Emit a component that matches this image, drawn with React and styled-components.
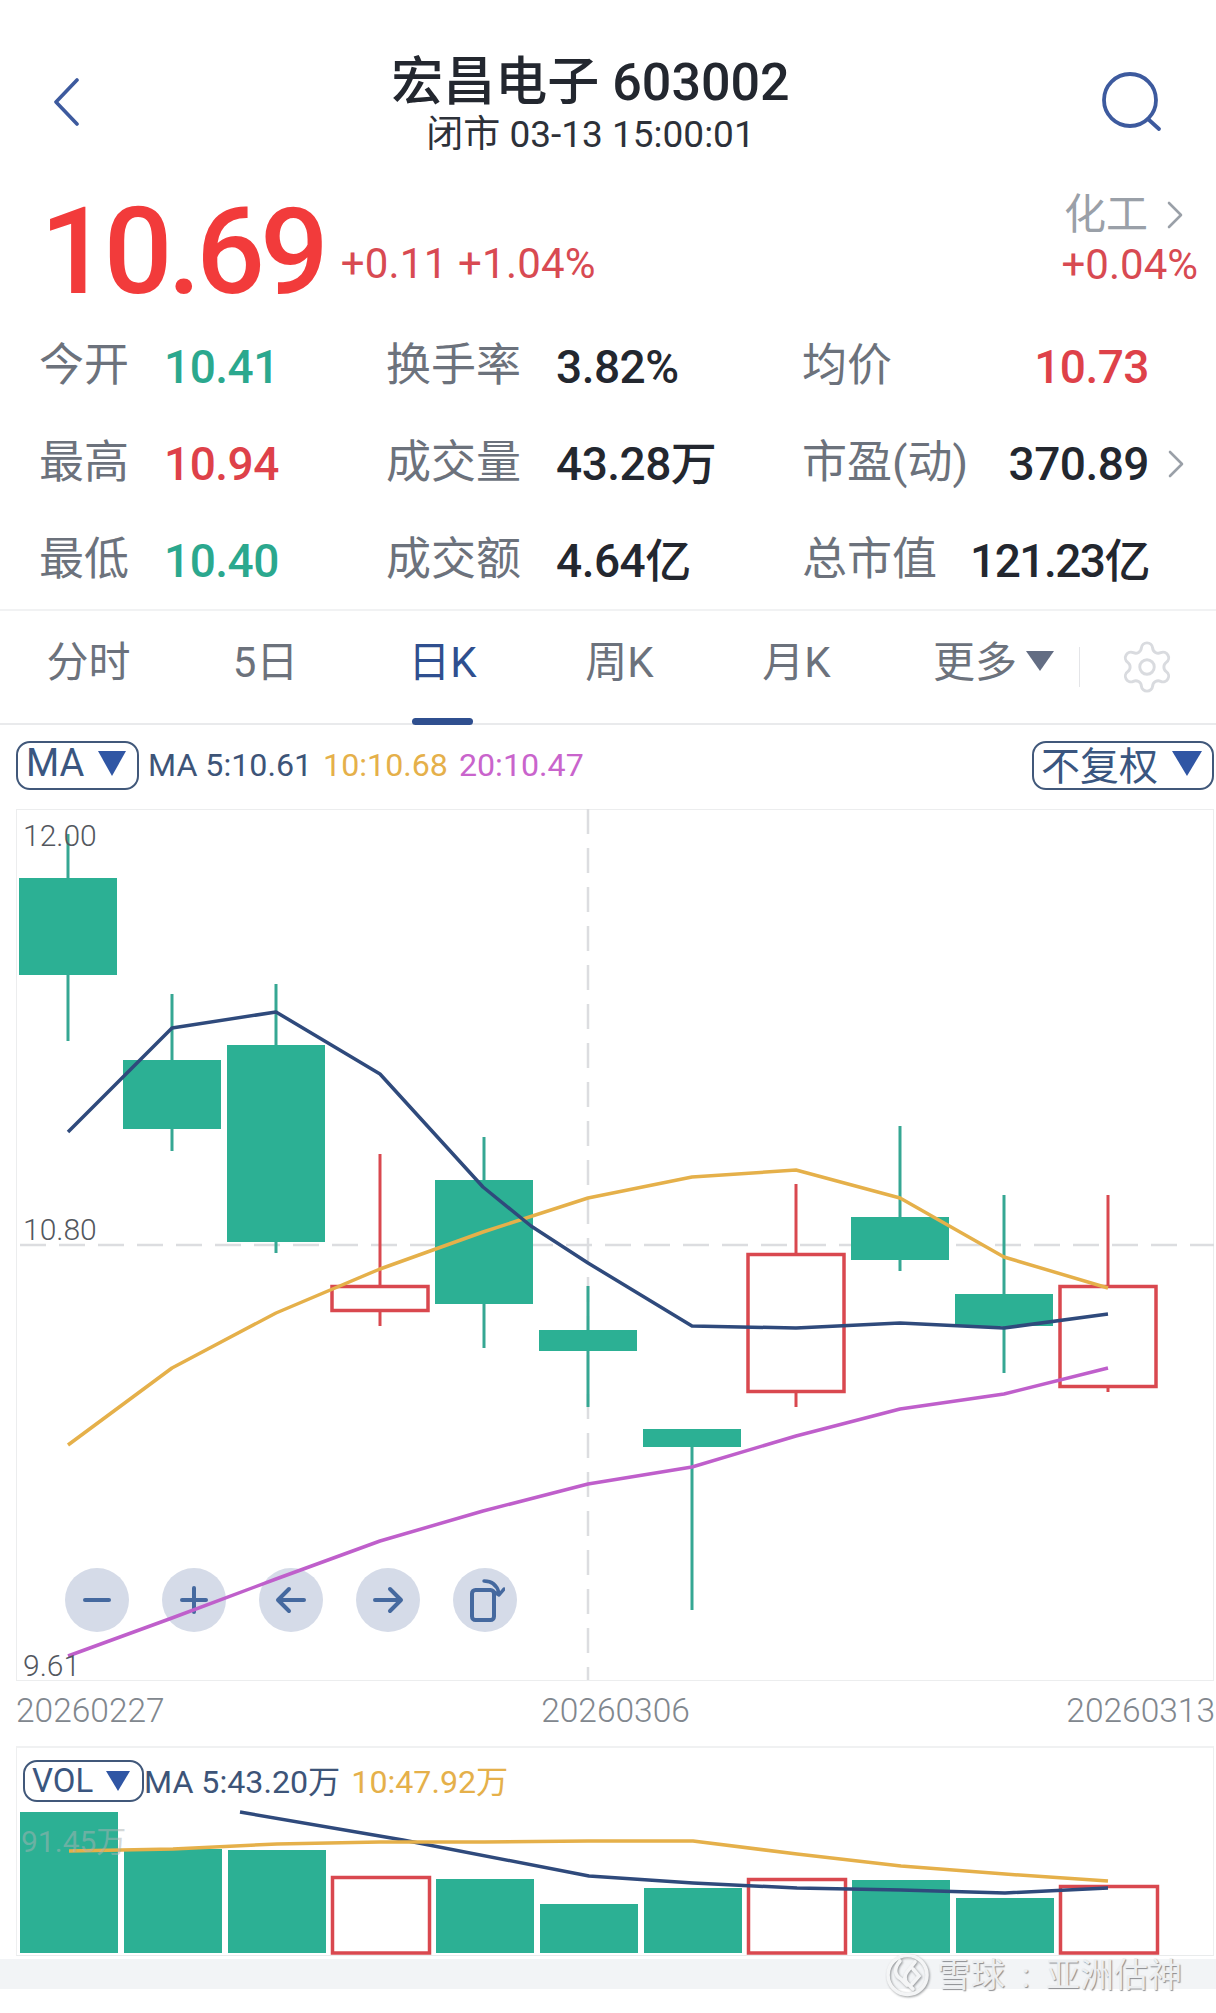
import React from 'react';
import styled, { createGlobalStyle } from 'styled-components';
import { Settings } from 'lucide-react';

const FONT = `Roboto, "Noto Sans CJK SC", sans-serif`;
const BLUE = '#3d5a9e';
const NAVY = '#2f4a7c';
const TEAL = '#2cb094';
const RED = '#d9484f';
const GOLD = '#e5b04a';
const PURPLE = '#bf5fcb';

const Global = createGlobalStyle`
  html, body { margin: 0; padding: 0; background: #fff; }
  body { font-family: ${FONT}; }
`;

const Page = styled.div`
  width: 1216px;
  height: 2013px;
  overflow: hidden;
  background: #fff;
  display: flex;
  flex-direction: column;
`;

const Header = styled.header`
  height: 160px;
  padding: 50px 54px 6px;
  box-sizing: border-box;
  display: flex;
  align-items: center;
  justify-content: space-between;
`;
const TitleBlock = styled.div`
  padding-top: 6px;
  display: flex;
  flex-direction: column;
  align-items: center;
`;
const Title = styled.div`
  font-size: 52px;
  line-height: 60px;
  font-weight: 500;
  color: #23272f;
  white-space: pre;
`;
const Subtitle = styled.div`
  font-size: 37px;
  line-height: 44px;
  color: #2d3139;
  white-space: pre;
`;

const QuoteRow = styled.section`
  height: 155px;
  box-sizing: border-box;
  padding: 30px 18px 0 40px;
  display: flex;
  align-items: flex-start;
`;
const Price = styled.div`
  font-size: 121px;
  line-height: 124px;
  font-weight: 500;
  letter-spacing: -5px;
  color: #f23b3b;
`;
const Change = styled.div`
  margin: 49px 0 0 17px;
  font-size: 42px;
  line-height: 50px;
  letter-spacing: 0.2px;
  color: #d84a52;
  white-space: pre;
`;
const Sector = styled.div`
  margin-left: auto;
  display: flex;
  flex-direction: column;
  align-items: flex-end;
`;
const SectorName = styled.div`
  display: flex;
  align-items: center;
  gap: 19px;
  padding-right: 15px;
  font-size: 42px;
  line-height: 50px;
  color: #9aa0a8;
`;
const SectorChange = styled.div`
  font-size: 42px;
  line-height: 50px;
  color: #d84a52;
`;

const Stats = styled.section`
  display: grid;
  grid-template-columns: 347px 416px 1fr;
  grid-auto-rows: 97px;
  padding: 3px 32px 0 39px;
  height: 291px;
  border-bottom: 2px solid #f1f2f3;
`;
const Stat = styled.div`
  display: flex;
  align-items: center;
  font-size: 45px;
  line-height: 50px;
  white-space: nowrap;
`;
const StatLabel = styled.span`
  width: ${p => p.$w}px;
  flex: none;
  padding-bottom: 2px;
  color: #6c727c;
`;
const StatValue = styled.span`
  font-size: 46px;
  letter-spacing: ${p => p.$ls ?? -0.5}px;
  font-weight: 500;
  color: ${p => p.$color || '#23272f'};
  ${p => p.$end && 'margin-left: auto;'}
`;
const ChevSlot = styled.span`
  width: 35px;
  flex: none;
  display: flex;
  justify-content: flex-end;
`;

const Tabs = styled.nav`
  height: 112px;
  display: flex;
  align-items: center;
  border-bottom: 2px solid #e9eaec;
  box-sizing: content-box;
`;
const Tab = styled.div`
  position: relative;
  width: 177px;
  height: 112px;
  padding-bottom: 18px;
  flex: none;
  box-sizing: border-box;
  display: flex;
  align-items: center;
  justify-content: ${p => (p.$start ? 'flex-start' : 'center')};
  ${p => p.$start && 'padding-left: 48px; gap: 9px;'}
  font-size: 42px;
  color: ${p => (p.$active ? '#2f4f8f' : '#6c727c')};
`;
const TabBar = styled.span`
  position: absolute;
  left: 58px;
  bottom: -2px;
  width: 61px;
  height: 7px;
  border-radius: 4px;
  background: #2f4f8f;
`;
const Triangle = styled.span`
  display: inline-block;
  flex: none;
  width: 0;
  height: 0;
  margin-top: ${p => p.$mt || 0}px;
  border-left: ${p => p.$w / 2}px solid transparent;
  border-right: ${p => p.$w / 2}px solid transparent;
  border-top: ${p => p.$h}px solid ${p => p.$color || '#3056a4'};
`;
const TabDivider = styled.span`
  width: 1px;
  height: 40px;
  margin-left: 17px;
  background: #e4e5e8;
`;
const GearWrap = styled.span`
  margin-left: 38px;
  display: flex;
  color: #d9dbdf;
`;

const Toolbar = styled.div`
  height: 84px;
  box-sizing: border-box;
  padding: 16px 2px 0 16px;
  display: flex;
  align-items: flex-start;
`;
const Selector = styled.div`
  height: ${p => p.$h}px;
  width: ${p => p.$w}px;
  flex: none;
  box-sizing: border-box;
  border: 2px solid #41587a;
  border-radius: 14px;
  display: flex;
  align-items: center;
  justify-content: space-between;
  padding: 0 ${p => p.$pr}px ${p => p.$pb}px ${p => p.$pl}px;
  font-size: ${p => p.$size}px;
  color: #3a5680;
  background: #fff;
`;
const Legend = styled.div`
  margin-left: ${p => p.$ml}px;
  height: ${p => p.$h}px;
  padding-bottom: ${p => p.$pb}px;
  box-sizing: border-box;
  display: flex;
  align-items: center;
  gap: 11px;
  font-size: 32.2px;
  white-space: nowrap;
`;
const LegendItem = styled.span`
  color: ${p => p.$color};
`;
const ToolbarEnd = styled.div`
  margin-left: auto;
`;

const ChartFrame = styled.div`
  position: relative;
  margin: 0 2px 0 16px;
  height: 872px;
  box-sizing: border-box;
`;
const ChartSvg = styled.svg`
  position: relative;
  z-index: 2;
  display: block;
`;
const AxisLabel = styled.span`
  position: absolute;
  z-index: 3;
  left: 7px;
  top: ${p => p.$top}px;
  font-size: 30px;
  line-height: 30px;
  font-weight: 300;
  color: #53575e;
`;
const Controls = styled.div`
  position: absolute;
  z-index: 1;
  left: 49px;
  top: 759px;
  display: flex;
  gap: 33px;
`;
const RoundBtn = styled.div`
  width: 64px;
  height: 64px;
  border-radius: 50%;
  background: #d5dbe8;
  display: flex;
  align-items: center;
  justify-content: center;
`;

const Dates = styled.div`
  height: 65px;
  box-sizing: border-box;
  padding: 13px 1px 0 16px;
  display: flex;
  justify-content: space-between;
  font-size: 33.5px;
  line-height: 34px;
  font-weight: 300;
  color: #81878e;
`;

const VolPanel = styled.div`
  position: relative;
  margin: 0 2px 0 16px;
  height: 210px;
  box-sizing: border-box;
  border-top: 2px solid #f0f1f2;
  border-left: 1px solid #eeeff0;
  border-right: 1px solid #eeeff0;
  border-bottom: 1px solid #e9ebec;
  display: flex;
  flex-direction: column;
`;
const VolHeader = styled.div`
  height: 59px;
  box-sizing: border-box;
  padding: 12px 0 0 6px;
  display: flex;
  align-items: flex-start;
`;
const VolMax = styled.span`
  position: absolute;
  left: 4px;
  top: 77px;
  z-index: 3;
  font-size: 30px;
  line-height: 34px;
  color: rgba(170, 178, 178, 0.5);
`;

const Band = styled.div`
  position: relative;
  margin-top: 3px;
  height: 30px;
  background: #f2f4f6;
`;
const Watermark = styled.div`
  position: absolute;
  left: 885px;
  top: -6px;
  display: flex;
  align-items: center;
  gap: 7px;
`;
const WatermarkText = styled.span`
  font-size: 34px;
  line-height: 44px;
  word-spacing: 8px;
  color: #eceef0;
  text-shadow: 1px 1px 1px rgba(70, 72, 76, 0.6);
  white-space: pre;
`;

const Back = () => (
  <svg width="25" height="48" viewBox="0 0 25 48" fill="none" stroke={BLUE} strokeWidth="3.6" strokeLinecap="round" strokeLinejoin="round">
    <path d="M23 2 2 24l21 22" />
  </svg>
);
const Search = () => (
  <svg width="60" height="60" viewBox="0 0 60 60" fill="none" stroke={BLUE} strokeWidth="3.8" strokeLinecap="round">
    <circle cx="28" cy="28" r="26" />
    <path d="M46 47l11 10" />
  </svg>
);
const Chev = () => (
  <svg width="16" height="28" viewBox="0 0 16 28" fill="none" stroke="#9aa0a8" strokeWidth="2.6" strokeLinecap="round" strokeLinejoin="round">
    <path d="M2 2l12 12L2 26" />
  </svg>
);
const IconSvg = ({ children }) => (
  <svg width="40" height="46" viewBox="0 0 40 46" fill="none" stroke="#45699f" strokeWidth="4" strokeLinecap="round" strokeLinejoin="round">{children}</svg>
);

// Chart data: [center x, wick top, wick bottom, body top, body bottom, rising]
const candles = [
  [68, 833, 1040, 877, 974, 0],
  [172, 993, 1150, 1059, 1128, 0],
  [276, 983, 1252, 1044, 1241, 0],
  [380, 1153, 1325, 1284, 1311, 1],
  [484, 1136, 1347, 1179, 1303, 0],
  [588, 1285, 1406, 1329, 1350, 0],
  [692, 1446, 1609, 1428, 1446, 0],
  [796, 1183, 1406, 1252, 1392, 1],
  [900, 1125, 1270, 1216, 1259, 0],
  [1004, 1194, 1372, 1293, 1325, 0],
  [1108, 1194, 1391, 1284, 1387, 1],
];
const ma5 = '68,1131 172,1027 276,1011 380,1073 483,1186 531,1225 588,1262 692,1325 796,1327 900,1322 1004,1327 1108,1313';
const ma10 = '68,1444 172,1367 276,1312 380,1268 483,1231 588,1197 692,1176 796,1169 900,1197 1004,1256 1108,1287';
const ma20 = '68,1655 172,1617 276,1578 380,1540 483,1510 588,1483 692,1466 796,1435 900,1408 1004,1393 1108,1367';

const vols = [
  [69, 1811, 0], [173, 1848, 0], [277, 1849, 0], [381, 1875, 1], [485, 1878, 0], [589, 1903, 0],
  [693, 1887, 0], [797, 1877, 1], [901, 1879, 0], [1005, 1897, 0], [1109, 1884, 1],
];
const volMa5 = '240,1811 403,1839 589,1875 693,1882 797,1887 901,1889 1005,1892 1108,1887';
const volMa10 = '69,1850 173,1848 277,1843 380,1841 484,1841 588,1840 693,1840 797,1853 901,1865 1005,1873 1108,1880';

const Candle = ({ c }) => {
  const [x, wt, wb, bt, bb, up] = c;
  const color = up ? RED : TEAL;
  const wick = up ? RED : '#36a793';
  return (
    <g>
      {wt < bt && <line x1={x} x2={x} y1={wt} y2={bt} stroke={wick} strokeWidth="3" />}
      {wb > bb && <line x1={x} x2={x} y1={bb} y2={wb} stroke={wick} strokeWidth="3" />}
      {up ? (
        <rect x={x - 48} y={bt + 1.5} width={96} height={bb - bt - 3} stroke={color} strokeWidth="3.5" />
      ) : (
        <rect x={x - 49} y={bt} width={98} height={bb - bt} fill={color} />
      )}
    </g>
  );
};

const Stat3 = ({ label, value, chev, color, ls }) => (
  <Stat>
    <StatLabel>{label}</StatLabel>
    <StatValue $end $color={color} $ls={ls}>{value}</StatValue>
    <ChevSlot>{chev && <Chev />}</ChevSlot>
  </Stat>
);

export default function App() {
  return (
    <Page>
      <Global />
      <Header>
        <Back />
        <TitleBlock>
          <Title>宏昌电子 603002</Title>
          <Subtitle>闭市 03-13 15:00:01</Subtitle>
        </TitleBlock>
        <Search />
      </Header>

      <QuoteRow>
        <Price>10.69</Price>
        <Change>+0.11 +1.04%</Change>
        <Sector>
          <SectorName>化工<Chev /></SectorName>
          <SectorChange>+0.04%</SectorChange>
        </Sector>
      </QuoteRow>

      <Stats>
        <Stat><StatLabel $w={125}>今开</StatLabel><StatValue $color="#2ba88e">10.41</StatValue></Stat>
        <Stat><StatLabel $w={170}>换手率</StatLabel><StatValue>3.82%</StatValue></Stat>
        <Stat3 label="均价" value="10.73" color="#de4149" />
        <Stat><StatLabel $w={125}>最高</StatLabel><StatValue $color="#de4149">10.94</StatValue></Stat>
        <Stat><StatLabel $w={170}>成交量</StatLabel><StatValue>43.28万</StatValue></Stat>
        <Stat3 label="市盈(动)" value="370.89" chev />
        <Stat><StatLabel $w={125}>最低</StatLabel><StatValue $color="#2ba88e">10.40</StatValue></Stat>
        <Stat><StatLabel $w={170}>成交额</StatLabel><StatValue>4.64亿</StatValue></Stat>
        <Stat3 label="总市值" value="121.23亿" ls={-1.5} />
      </Stats>

      <Tabs>
        <Tab>分时</Tab>
        <Tab>5日</Tab>
        <Tab $active>日K<TabBar /></Tab>
        <Tab>周K</Tab>
        <Tab>月K</Tab>
        <Tab $start>更多<Triangle $w={28} $h={20} $mt={6} $color="#636d83" /></Tab>
        <TabDivider />
        <GearWrap><Settings size={58} strokeWidth={1.2} /></GearWrap>
      </Tabs>

      <Toolbar>
        <Selector $w={123} $h={49} $size={38} $pl={8} $pr={11} $pb={5}>MA<Triangle $w={29} $h={25} /></Selector>
        <Legend $ml={9} $h={49} $pb={1}>
          <LegendItem $color="#3d5478">MA 5:10.61</LegendItem>
          <LegendItem $color={GOLD}>10:10.68</LegendItem>
          <LegendItem $color="#c964cc">20:10.47</LegendItem>
        </Legend>
        <ToolbarEnd>
          <Selector $w={182} $h={49} $size={39} $pl={7} $pr={10} $pb={5}>不复权<Triangle $w={30} $h={25} /></Selector>
        </ToolbarEnd>
      </Toolbar>

      <ChartFrame>
        <Controls>
          <RoundBtn><IconSvg><path d="M8 23h24" /></IconSvg></RoundBtn>
          <RoundBtn><IconSvg><path d="M8 23h24M20 11v24" /></IconSvg></RoundBtn>
          <RoundBtn><IconSvg><path d="M33 23H8M18 12 7 23l11 11" /></IconSvg></RoundBtn>
          <RoundBtn><IconSvg><path d="M7 23h25M22 12l11 11-11 11" /></IconSvg></RoundBtn>
          <RoundBtn>
            <IconSvg>
              <rect x="7" y="13" width="22" height="30" rx="3.5" />
              <path d="M19 4c8 0 13 4 15 12M29 15l5 3 5-6" strokeWidth="3.4" />
            </IconSvg>
          </RoundBtn>
        </Controls>
        <ChartSvg width="1198" height="872" viewBox="16 808 1198 872" fill="none">
          <rect x="16.5" y="808.5" width="1197" height="871" stroke="#ecedee" />
          <line x1="20" x2="1214" y1="1244" y2="1244" stroke="#dcdde0" strokeWidth="2.5" strokeDasharray="26 13" />
          <line x1="588" x2="588" y1="808" y2="1679" stroke="#dcdde0" strokeWidth="2.5" strokeDasharray="25 14" />
          {candles.map(c => <Candle key={c[0]} c={c} />)}
          <polyline points={ma10} stroke={GOLD} strokeWidth="3.5" strokeLinejoin="round" />
          <polyline points={ma5} stroke={NAVY} strokeWidth="3.5" strokeLinejoin="round" />
          <polyline points={ma20} stroke={PURPLE} strokeWidth="3.5" strokeLinejoin="round" />
        </ChartSvg>
        <AxisLabel $top={12}>12.00</AxisLabel>
        <AxisLabel $top={406}>10.80</AxisLabel>
        <AxisLabel $top={842}>9.61</AxisLabel>
      </ChartFrame>

      <Dates>
        <span>20260227</span>
        <span>20260306</span>
        <span>20260313</span>
      </Dates>

      <VolPanel>
        <VolHeader>
          <Selector $w={121} $h={42} $size={33} $pl={7} $pr={12} $pb={1}>VOL<Triangle $w={24} $h={20} /></Selector>
          <Legend $ml={0} $h={42} $pb={5}>
            <LegendItem $color="#3d5478">MA 5:43.20万</LegendItem>
            <LegendItem $color={GOLD}>10:47.92万</LegendItem>
          </Legend>
        </VolHeader>
        <svg width="1196" height="148" viewBox="17 1806 1196 148" fill="none">
          {vols.map(([x, top, up]) => up ? (
            <rect key={x} x={x - 48.5} y={top + 1.5} width={97} height={1952 - top - 1.5} stroke={RED} strokeWidth="3.5" />
          ) : (
            <rect key={x} x={x - 49} y={top} width={98} height={1952 - top} fill={TEAL} />
          ))}
          <polyline points={volMa5} stroke={NAVY} strokeWidth="3.5" strokeLinejoin="round" />
          <polyline points={volMa10} stroke={GOLD} strokeWidth="3.5" strokeLinejoin="round" />
        </svg>
        <VolMax>91.45万</VolMax>
      </VolPanel>

      <Band>
        <Watermark>
          <svg width="45" height="44" viewBox="0 0 45 44" fill="none" stroke="#f4f5f6" strokeWidth="3.6" strokeLinecap="round" style={{ filter: 'drop-shadow(1px 1px 1px rgba(70,72,76,.55))' }}>
            <circle cx="22.5" cy="22" r="19.5" />
            <path d="M15 8c-6 7-6 14 1 18l6 6M30 9l-8 10c-3 4-3 7 0 11l6 6M28 16l6 7-7 8" />
          </svg>
          <WatermarkText>雪球 : 亚洲估神</WatermarkText>
        </Watermark>
      </Band>
    </Page>
  );
}
